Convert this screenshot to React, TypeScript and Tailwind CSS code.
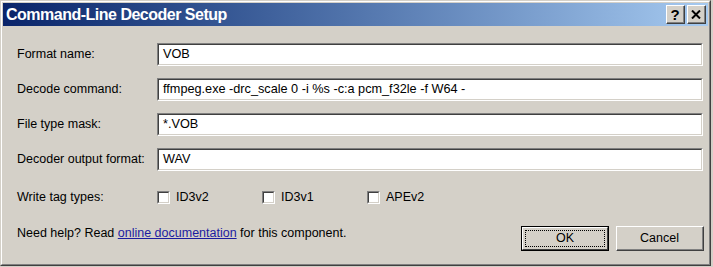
import React from 'react';

const font = { fontFamily: '"Liberation Sans", Arial, sans-serif' };

const SunkenInput: React.FC<{ value: string }> = ({ value }) => (
  <div className="h-[23px] border-t border-l border-[#808080] border-r-white border-b-white border-r border-b">
    <div className="h-full border-t border-l border-[#404040] border-r border-b border-r-[#d4d0c8] border-b-[#d4d0c8] bg-white pl-[4px] flex items-center text-[12.7px] text-black whitespace-nowrap overflow-hidden">
      {value}
    </div>
  </div>
);

const CheckBox: React.FC<{ label: string }> = ({ label }) => (
  <label className="flex items-center gap-[6px] w-[105px]">
    <span className="w-[13px] h-[13px] border-t border-l border-[#808080] border-r border-b border-r-white border-b-white">
      <span className="block w-full h-full bg-white border-t border-l border-[#404040] border-r border-b border-r-[#d4d0c8] border-b-[#d4d0c8]" />
    </span>
    <span>{label}</span>
  </label>
);

const TitleButton: React.FC<{ children: React.ReactNode }> = ({ children }) => (
  <div className="w-[19px] h-[19px] border-t border-l border-white border-r border-b border-r-[#404040] border-b-[#404040] bg-[#d4d0c8]">
    <div className="w-full h-full border-r border-b border-r-[#808080] border-b-[#808080] flex items-center justify-center text-black">
      {children}
    </div>
  </div>
);

const App: React.FC = () => {
  const rows: [string, string][] = [
    ['Format name:', 'VOB'],
    ['Decode command:', 'ffmpeg.exe -drc_scale 0 -i %s -c:a pcm_f32le -f W64 -'],
    ['File type mask:', '*.VOB'],
    ['Decoder output format:', 'WAV'],
  ];

  return (
    <div className="w-[713px] h-[267px] bg-[#d4d0c8]" style={font}>
      <div className="w-[711px] h-[266px] border-t border-l border-[#d4d0c8] border-r border-b border-r-[#404040] border-b-[#404040]">
        <div className="w-full h-full border-t border-l border-white border-r border-b border-r-[#808080] border-b-[#808080] p-[1px] flex flex-col">
          {/* title bar */}
          <div className="h-[23px] flex items-center pl-[3px] pr-[2px] bg-gradient-to-r from-[#0a246a] to-[#a6caf0]">
            <span className="text-white font-bold text-[16px] leading-none tracking-[-0.5px]">Command-Line Decoder Setup</span>
            <div className="ml-auto flex gap-[2px]">
              <TitleButton>
                <span className="font-bold text-[15px] leading-none">?</span>
              </TitleButton>
              <TitleButton>
                <svg width="10" height="9" viewBox="0 0 10 9">
                  <path d="M1 0.5 L9 8.5 M9 0.5 L1 8.5" stroke="black" strokeWidth="2" />
                </svg>
              </TitleButton>
            </div>
          </div>

          {/* body */}
          <div className="flex-1 pl-[14px] pr-[5px] pt-[17px] text-[12.5px] text-black">
            <div className="grid grid-cols-[140px_1fr] gap-y-[12px] items-center">
              {rows.map(([label, value]) => (
                <React.Fragment key={label}>
                  <span className="whitespace-nowrap">{label}</span>
                  <SunkenInput value={value} />
                </React.Fragment>
              ))}
            </div>

            <div className="grid grid-cols-[140px_1fr] items-center mt-[15px] h-[23px]">
              <span>Write tag types:</span>
              <div className="flex">
                <CheckBox label="ID3v2" />
                <CheckBox label="ID3v1" />
                <CheckBox label="APEv2" />
              </div>
            </div>

            <div className="flex items-start mt-[17px]">
              <span className="leading-[14px]">
                Need help? Read <a className="text-[#1c1ca0] underline">online documentation</a> for this component.
              </span>
              <div className="ml-auto flex gap-[7px] mr-[-1px]">
                <button className="w-[88px] h-[25px] border border-black bg-[#d4d0c8]">
                  <div className="w-full h-full border-t border-l border-white border-r border-b border-r-[#404040] border-b-[#404040] p-[2px]">
                    <div className="w-full h-full border border-dotted border-black flex items-center justify-center">OK</div>
                  </div>
                </button>
                <button className="w-[88px] h-[25px] bg-[#d4d0c8] border-t border-l border-white border-r border-b border-r-[#404040] border-b-[#404040]">
                  <div className="w-full h-full border-r border-b border-r-[#808080] border-b-[#808080] flex items-center justify-center">Cancel</div>
                </button>
              </div>
            </div>
          </div>
        </div>
      </div>
    </div>
  );
};

export default App;
